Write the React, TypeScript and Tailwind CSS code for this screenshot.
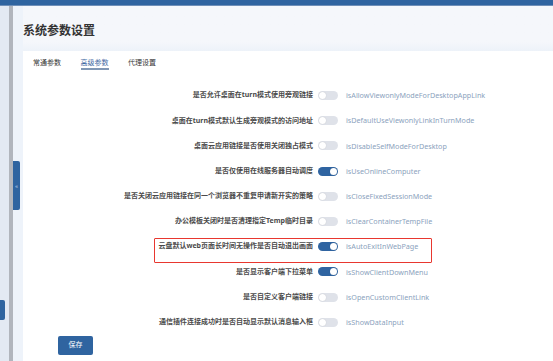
import React from "react";

const rows: { label: string; key: string; on: boolean; hl?: boolean }[] = [
  { label: "是否允许桌面在turn模式使用旁观链接", key: "isAllowViewonlyModeForDesktopAppLink", on: false },
  { label: "桌面在turn模式默认生成旁观模式的访问地址", key: "isDefaultUseViewonlyLinkInTurnMode", on: false },
  { label: "桌面云应用链接是否使用关闭独占模式", key: "isDisableSelfModeForDesktop", on: false },
  { label: "是否仅使用在线服务器自动调度", key: "isUseOnlineComputer", on: true },
  { label: "是否关闭云应用链接在同一个浏览器不重复申请新开实的策略", key: "isCloseFixedSessionMode", on: false },
  { label: "办公模板关闭时是否清理指定Temp临时目录", key: "isClearContainerTempFile", on: false },
  { label: "云盘默认web页面长时间无操作是否自动退出画面", key: "isAutoExitInWebPage", on: true, hl: true },
  { label: "是否显示客户端下拉菜单", key: "isShowClientDownMenu", on: true },
  { label: "是否自定义客户端链接", key: "isOpenCustomClientLink", on: false },
  { label: "通信插件连接成功时是否自动显示默认消息输入框", key: "isShowDataInput", on: false },
];

function Toggle({ on }: { on: boolean }) {
  return (
    <div
      className={
        "w-[20px] h-[9px] rounded-full flex items-center px-[1px] " +
        (on ? "bg-[#2f64a1] justify-end" : "bg-[#dfe2e9] justify-start")
      }
    >
      <div className="w-[7px] h-[7px] rounded-full bg-white shadow-[0_0_1px_rgba(0,0,0,0.2)]" />
    </div>
  );
}

export default function App() {
  return (
    <div
      className="w-[553px] h-[361px] flex flex-col overflow-hidden bg-[#f5f7fb]"
      style={{ fontFamily: '"Noto Sans", "Noto Sans CJK SC", sans-serif' }}
    >
      <div className="h-[6px] bg-[#2f64a0] border-b border-[#6f8fb8] shrink-0" />
      <div className="flex flex-1 min-h-0">
        <div className="w-[9px] bg-[#e3e9f3] relative shrink-0">
          <div className="absolute left-0 top-[294px] w-[5px] h-[20px] bg-[#2f64a0] rounded-r-[2px]" />
        </div>
        <div className="w-[4px] bg-[#b1b5bd] shrink-0" />
        <div className="w-[10px] bg-[#eef3fa] relative shrink-0">
          <div className="absolute left-0 top-[155px] w-[7px] h-[49px] bg-[#2f64a0] rounded-r-[2px] flex items-center justify-center text-[6px] leading-none text-[#c9d6ea]">
            «
          </div>
        </div>
        <div className="flex-1 flex flex-col min-w-0">
          <div className="h-[45px] shrink-0 flex items-center bg-gradient-to-b from-[#f5f7fb] from-80% to-[#edf2f9]">
            <div className="text-[12px] font-bold text-[#333] leading-none mt-[4px]">系统参数设置</div>
          </div>
          <div className="flex-1 bg-white flex flex-col">
            <div className="flex pl-[10px] gap-[19.5px] pt-[7px] text-[7px] leading-[9px]">
              <div className="w-[28px] text-[#333] pb-[2px]">常通参数</div>
              <div className="w-[28px] text-[#3f69a3] pb-[1px] border-b-[2px] border-[#8097b5]">高级参数</div>
              <div className="w-[28px] text-[#333] pb-[2px]">代理设置</div>
            </div>
            <div className="mt-[13px] flex flex-col">
              {rows.map((r) => (
                <div key={r.key} className="relative h-[25.2px] flex items-center">
                  <div className="w-[290px] text-right text-[7px] font-bold text-[#4a4a4a] whitespace-nowrap">
                    {r.label}
                  </div>
                  <div className="ml-[5px]">
                    <Toggle on={r.on} />
                  </div>
                  <div className="ml-[8px] text-[7.2px] text-[#8ba2bd] whitespace-nowrap">{r.key}</div>
                  {r.hl && (
                    <div className="absolute left-[131px] top-[3.5px] w-[278px] h-[25px] border-[1.5px] border-[#e8372f] rounded-[1px]" />
                  )}
                </div>
              ))}
            </div>
            <div className="pl-[35px] mt-[1px]">
              <button className="w-[35px] h-[19px] bg-[#2f64a0] text-white text-[7px] rounded-[2px] flex items-center justify-center">
                保存
              </button>
            </div>
          </div>
        </div>
      </div>
    </div>
  );
}
